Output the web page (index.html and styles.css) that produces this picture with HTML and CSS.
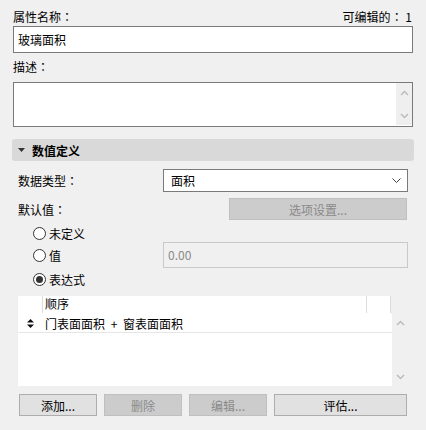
FILE: index.html
```html
<!DOCTYPE html>
<html lang="zh">
<head>
<meta charset="utf-8">
<title>属性</title>
<link rel="stylesheet" href="styles.css">
</head>
<body>
<div class="panel">
  <div class="top-row"><span>属性名称<span class="colon">：</span></span><span>可编辑的<span class="colon">：</span> 1</span></div>
  <div class="field name-field">玻璃面积</div>
  <div class="label desc-label">描述<span class="colon">：</span></div>
  <div class="field textarea">
    <div class="vscroll">
      <svg width="9" height="6" viewBox="0 0 9 6"><path d="M1 5 L4.5 1.5 L8 5" fill="none" stroke="#bcbcbc" stroke-width="1.5"/></svg>
      <svg width="9" height="6" viewBox="0 0 9 6"><path d="M1 1 L4.5 4.5 L8 1" fill="none" stroke="#bcbcbc" stroke-width="1.5"/></svg>
    </div>
  </div>
  <div class="section-header">
    <svg class="tri" width="7" height="4" viewBox="0 0 7 4"><path d="M0 0 H7 L3.5 4 Z" fill="#333"/></svg>
    <span>数值定义</span>
  </div>
  <div class="form">
    <div class="form-row r-type">
      <span>数据类型<span class="colon">：</span></span>
      <div class="select"><span>面积</span><svg width="9" height="5" viewBox="0 0 9 5"><path d="M0.5 0.5 L4.5 4.5 L8.5 0.5" fill="none" stroke="#444" stroke-width="1"/></svg></div>
    </div>
    <div class="form-row r-default">
      <span>默认值<span class="colon">：</span></span>
      <div class="btn disabled options">选项设置...</div>
    </div>
    <div class="radio-row r1"><span class="radio"></span><span>未定义</span></div>
    <div class="radio-row r2"><span class="radio"></span><span>值</span><div class="value-input">0.00</div></div>
    <div class="radio-row r3"><span class="radio checked"></span><span>表达式</span></div>
    <div class="table">
      <div class="thead">
        <div class="th c-icon"></div>
        <div class="th c-main">顺序</div>
        <div class="th c-end"></div>
      </div>
      <div class="tbody-wrap">
        <div class="tbody">
          <div class="tr">
            <div class="td c-icon"><svg width="7" height="9" viewBox="0 0 7 9"><path d="M3.5 0 L7 3.5 H0 Z M3.5 9 L0 5.5 H7 Z" fill="#111"/></svg></div>
            <div class="td c-text">门表面面积 + 窗表面面积</div>
          </div>
        </div>
        <div class="tscroll">
          <svg width="9" height="6" viewBox="0 0 9 6"><path d="M1 5 L4.5 1.5 L8 5" fill="none" stroke="#bcbcbc" stroke-width="1.5"/></svg>
          <svg width="9" height="6" viewBox="0 0 9 6"><path d="M1 1 L4.5 4.5 L8 1" fill="none" stroke="#bcbcbc" stroke-width="1.5"/></svg>
        </div>
      </div>
    </div>
    <div class="buttons">
      <div class="btn small">添加...</div>
      <div class="btn small disabled">删除</div>
      <div class="btn small disabled">编辑...</div>
      <div class="btn large">评估...</div>
    </div>
  </div>
</div>
</body>
</html>
```

FILE: styles.css
```css
* { box-sizing: border-box; }
html, body {
  margin: 0;
  padding: 0;
  background: #f0f0f0;
}
body {
  font-family: "Noto Sans CJK SC", "Noto Sans", sans-serif;
  font-size: 12px;
  color: #000;
  width: 426px;
  height: 430px;
  overflow: hidden;
}
.colon {
  font-family: "Noto Sans CJK TC", "Noto Sans CJK JP", sans-serif;
  font-feature-settings: "locl" 0;
}
.panel {
  padding: 9px 13px 0 13px;
  display: flex;
  flex-direction: column;
}
.top-row {
  display: flex;
  justify-content: space-between;
  height: 16px;
  line-height: 16px;
  padding-right: 1px;
}
.field {
  background: #fff;
  border: 1px solid #7a7a7a;
}
.name-field {
  margin-top: 1px;
  height: 27px;
  line-height: 25px;
  padding-left: 4px;
}
.label {
  height: 16px;
  line-height: 16px;
}
.desc-label { margin-top: 6px; }
.textarea {
  margin-top: 7px;
  height: 45px;
  display: flex;
  justify-content: flex-end;
}
.vscroll {
  width: 16px;
  margin: 0 0 1px 0;
  background: #efefef;
  display: flex;
  flex-direction: column;
  align-items: center;
  justify-content: space-between;
  padding: 7px 0 6px;
}
.vscroll svg, .tscroll svg { display: block; }
.section-header {
  margin: 12px -1px 0 -1px;
  height: 22px;
  background: #d9d9d9;
  border-radius: 3px;
  display: flex;
  align-items: center;
  padding-left: 6px;
  font-weight: bold;
}
.section-header .tri { margin-right: 7px; }
.form {
  padding: 0 5px;
  display: flex;
  flex-direction: column;
}
.form-row {
  display: flex;
  align-items: center;
  justify-content: space-between;
}
.r-type { margin-top: 8px; height: 23px; }
.select {
  width: 245px;
  height: 23px;
  background: #fff;
  border: 1px solid #7a7a7a;
  display: flex;
  align-items: center;
  justify-content: space-between;
  padding: 0 6px 0 7px;
}
.r-default { margin-top: 6px; height: 22px; }
.btn {
  height: 22px;
  border: 1px solid #adadad;
  background: #e1e1e1;
  display: flex;
  align-items: center;
  justify-content: center;
}
.btn.disabled {
  background: #cccccc;
  border-color: #bfbfbf;
  color: #8a8a8a;
}
.options { width: 178px; margin-right: 1px; }
.radio-row {
  display: flex;
  align-items: center;
  padding-left: 15px;
}
.radio-row.r1 { margin-top: 5px; height: 16px; }
.radio-row.r2 { margin-top: 1px; height: 26px; }
.radio-row.r3 { margin-top: 3px; height: 16px; }
.radio {
  width: 13px;
  height: 13px;
  border: 1px solid #333;
  border-radius: 50%;
  background: #fff;
  margin-right: 3px;
  display: flex;
  align-items: center;
  justify-content: center;
}
.radio.checked::after {
  content: "";
  width: 7px;
  height: 7px;
  border-radius: 50%;
  background: #333;
}
.value-input {
  margin-left: auto;
  width: 245px;
  height: 26px;
  border: 1px solid #c9c9c9;
  background: #f0f0f0;
  color: #8a8a8a;
  line-height: 24px;
  padding-left: 4px;
}
.table {
  margin-top: 9px;
  height: 90px;
  display: flex;
  flex-direction: column;
}
.thead {
  width: 373px;
  height: 18px;
  background: #fff;
  display: flex;
}
.th {
  height: 17px;
  line-height: 16px;
  border-right: 1px solid #dcdcdc;
}
.th.c-icon { width: 25px; }
.th.c-main { width: 324px; padding-left: 2px; }
.th.c-end { width: 24px; }
.tbody-wrap {
  display: flex;
  height: 72px;
}
.tbody {
  width: 374px;
  background: #fff;
}
.tr {
  display: flex;
  height: 19px;
  border-bottom: 1px solid #e6e6e6;
  align-items: center;
}
.td.c-icon {
  width: 24px;
  display: flex;
  justify-content: center;
  padding-left: 1px;
}
.td.c-icon svg { display: block; }
.td.c-text {
  padding-left: 3px;
  word-spacing: 3px;
}
.tscroll {
  width: 16px;
  display: flex;
  flex-direction: column;
  align-items: center;
  justify-content: space-between;
  padding: 6px 0 6px;
}
.buttons {
  margin-top: 8px;
  display: flex;
  gap: 7px;
  padding-left: 1px;
}
.btn.small { width: 78px; }
.btn.large { width: 133px; }
```
